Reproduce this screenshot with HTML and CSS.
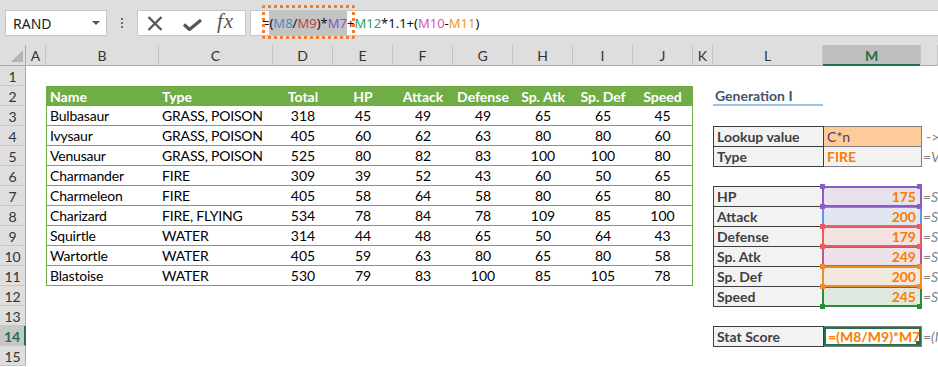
FILE: index.html
```html
<!DOCTYPE html>
<html lang="en">
<head>
    <meta charset="UTF-8">
    <meta name="viewport" content="width=device-width, initial-scale=1.0">
    <title>Pokemon Stat Score</title>
    <link rel="stylesheet" href="styles.css">
</head>
<body>
    <div class="toolbar">
        <div class="namebox">RAND<span class="caret"></span></div>
        <div class="grip"><i></i><i></i><i></i></div>
        <div class="fxbox">
            <svg class="ico-x" width="16" height="15" viewBox="0 0 16 15"><path d="M1.5 1 L14.5 14 M14.5 1 L1.5 14" stroke="#555" stroke-width="2.3" fill="none"/></svg>
            <svg class="ico-ok" width="19" height="12" viewBox="0 0 19 12"><path d="M1 5.5 L6.5 10.5 L18 1" stroke="#555" stroke-width="3.2" fill="none"/></svg>
            <span class="fx">fx</span>
        </div>
        <div class="formula">=<span class="sel">(<span class="r-blue">M8</span>/<span class="r-red">M9</span>)*<span class="r-purple">M7</span></span>+<span class="r-green">M12</span>*1.1+(<span class="r-pink">M10</span>-<span class="r-orange">M11</span>)</div>
        <div class="callout"></div>
    </div>

    <div class="colheads">
        <div class="corner"><svg width="25" height="20"><polygon points="23,5 23,17 11,17" fill="#b4b4b4"/></svg></div>
        <div>A</div><div>B</div><div>C</div><div>D</div><div>E</div><div>F</div><div>G</div>
        <div>H</div><div>I</div><div>J</div><div>K</div><div>L</div><div class="active">M</div><div></div>
    </div>

    <div class="sheet">
        <div class="rowheads">
            <div>1</div><div>2</div><div>3</div><div>4</div><div>5</div>
            <div>6</div><div>7</div><div>8</div><div>9</div><div>10</div>
            <div>11</div><div>12</div><div>13</div><div class="active">14</div><div>15</div>
        </div>

        <div class="canvas">
            <table class="poke">
                <colgroup>
                    <col style="width:113px"><col style="width:114px">
                    <col><col><col><col><col><col><col>
                </colgroup>
                <thead>
                    <tr><th class="txt">Name</th><th class="txt">Type</th><th>Total</th><th>HP</th><th>Attack</th><th>Defense</th><th>Sp. Atk</th><th>Sp. Def</th><th>Speed</th></tr>
                </thead>
                <tbody>
                    <tr><td class="txt">Bulbasaur</td><td class="txt">GRASS, POISON</td><td>318</td><td>45</td><td>49</td><td>49</td><td>65</td><td>65</td><td>45</td></tr>
                    <tr><td class="txt">Ivysaur</td><td class="txt">GRASS, POISON</td><td>405</td><td>60</td><td>62</td><td>63</td><td>80</td><td>80</td><td>60</td></tr>
                    <tr><td class="txt">Venusaur</td><td class="txt">GRASS, POISON</td><td>525</td><td>80</td><td>82</td><td>83</td><td>100</td><td>100</td><td>80</td></tr>
                    <tr><td class="txt">Charmander</td><td class="txt">FIRE</td><td>309</td><td>39</td><td>52</td><td>43</td><td>60</td><td>50</td><td>65</td></tr>
                    <tr><td class="txt">Charmeleon</td><td class="txt">FIRE</td><td>405</td><td>58</td><td>64</td><td>58</td><td>80</td><td>65</td><td>80</td></tr>
                    <tr><td class="txt">Charizard</td><td class="txt">FIRE, FLYING</td><td>534</td><td>78</td><td>84</td><td>78</td><td>109</td><td>85</td><td>100</td></tr>
                    <tr><td class="txt">Squirtle</td><td class="txt">WATER</td><td>314</td><td>44</td><td>48</td><td>65</td><td>50</td><td>64</td><td>43</td></tr>
                    <tr><td class="txt">Wartortle</td><td class="txt">WATER</td><td>405</td><td>59</td><td>63</td><td>80</td><td>65</td><td>80</td><td>58</td></tr>
                    <tr><td class="txt">Blastoise</td><td class="txt">WATER</td><td>530</td><td>79</td><td>83</td><td>100</td><td>85</td><td>105</td><td>78</td></tr>
                </tbody>
            </table>

            <div class="gen">Generation I</div>

            <table class="block lookup">
                <tr><td class="out">Lookup value</td><td class="inp">C*n</td><td class="note plain">-&gt;</td></tr>
                <tr><td class="out">Type</td><td class="calc">FIRE</td><td class="note">=V</td></tr>
            </table>

            <table class="block stats">
                <tr><td class="out">HP</td><td class="calc num hl h-purple">175</td><td class="note">=Sc</td></tr>
                <tr><td class="out">Attack</td><td class="calc num hl h-blue">200</td><td class="note">=Sc</td></tr>
                <tr><td class="out">Defense</td><td class="calc num hl h-red">179</td><td class="note">=Sc</td></tr>
                <tr><td class="out">Sp. Atk</td><td class="calc num hl h-pink">249</td><td class="note">=Sc</td></tr>
                <tr><td class="out">Sp. Def</td><td class="calc num hl h-orange">200</td><td class="note">=Sc</td></tr>
                <tr><td class="out">Speed</td><td class="calc num hl h-green">245</td><td class="note">=Sc</td></tr>
            </table>

            <table class="block score">
                <tr><td class="out">Stat Score</td><td class="calc editing">=(M8/M9)*M7+</td><td class="note">=(M</td></tr>
            </table>
        </div>
    </div>
</body>
</html>
```

FILE: styles.css
```css
body {
    margin: 0;
    overflow: hidden;
    background: #fff;
    font-family: Lato, "Liberation Sans", sans-serif;
    color: #000;
}
* {
    box-sizing: border-box;
}

/* formula bar */
.toolbar {
    position: relative;
    height: 45px;
    padding-top: 10px;
    background: #dedede;
    display: flex;
    align-items: flex-start;
}
.namebox {
    margin-left: 5px;
    width: 102px;
    height: 26px;
    background: #fff;
    border: 1px solid #c6c6c6;
    display: flex;
    align-items: center;
    padding-left: 7px;
    font: 14px "Noto Sans", sans-serif;
    color: #222;
}
.caret {
    margin-left: auto;
    margin-right: 6px;
    border-left: 4px solid transparent;
    border-right: 4px solid transparent;
    border-top: 4px solid #555;
}
.grip {
    width: 30px;
    height: 26px;
    display: flex;
    flex-direction: column;
    align-items: center;
    justify-content: center;
    gap: 2px;
}
.grip i {
    width: 2px;
    height: 2px;
    background: #6b6b6b;
}
.fxbox {
    width: 109px;
    height: 26px;
    background: #fff;
    border: 1px solid #c6c6c6;
    display: flex;
    align-items: center;
    padding-left: 9px;
}
.ico-ok {
    margin-left: 20px;
    margin-top: 3px;
}
.fx {
    margin-left: 15px;
    font: italic 21px "Liberation Serif", serif;
    letter-spacing: 1px;
    color: #555;
    margin-top: -3px;
}
.formula {
    flex: 1;
    margin-left: 4px;
    height: 26px;
    background: #fff;
    border: 1px solid #c6c6c6;
    border-right: none;
    padding-left: 11px;
    font: 13px "Noto Sans", sans-serif;
    line-height: 24px;
    color: #111;
    white-space: nowrap;
}
.sel {
    background: #c3c3c3;
    padding: 3px 0;
}
.r-blue { color: #4d87c2; }
.r-red { color: #c2404a; }
.r-purple { color: #8a4fc9; }
.r-green { color: #25a36f; }
.r-pink { color: #d257b6; }
.r-orange { color: #f0952b; }
.callout {
    position: absolute;
    left: 262px;
    top: 5px;
    width: 93px;
    height: 34px;
    border: 3px dotted #ed7d31;
    border-radius: 3px;
}

/* headers */
.colheads {
    display: grid;
    grid-template-columns: 26px 20px 113px 114px repeat(7, 60px) 20px 110px 98px 1fr;
    height: 21px;
    background: #dedede;
    border-bottom: 1px solid #ababab;
}
.colheads div {
    border-right: 1px solid #c4c4c4;
    text-align: center;
    font-size: 14px;
    line-height: 21px;
    color: #333;
}
.colheads .corner {
    border-right: 1px solid #ababab;
}
.colheads .corner svg {
    display: block;
}
.colheads .active {
    background: #bebebe;
    color: #217346;
    font-weight: bold;
    box-shadow: inset 0 -2px #217346;
}
.sheet {
    display: flex;
}
.rowheads {
    width: 26px;
    flex: none;
    background: #dedede;
}
.rowheads div {
    height: 20px;
    border-right: 1px solid #ababab;
    border-bottom: 1px solid #c8c8c8;
    text-align: center;
    font-size: 14px;
    line-height: 21px;
    color: #333;
}
.rowheads .active {
    background: #c6c6c6;
    color: #217346;
    font-weight: bold;
    border-right: 2px solid #217346;
}

/* cells */
.canvas {
    flex: 1;
    display: grid;
    grid-template-columns: 20px 113px 114px repeat(7, 60px) 20px 110px 98px 1fr;
    grid-template-rows: repeat(15, 20px);
    font-size: 14px;
}
.poke {
    grid-column: 2 / 11;
    grid-row: 2 / 12;
    table-layout: fixed;
    width: 647px;
    border-collapse: separate;
    border-spacing: 0;
}
.poke tr {
    height: 20px;
}
.poke th, .poke td {
    padding: 0 3px;
    text-align: center;
    white-space: nowrap;
    line-height: 19px;
}
.poke th {
    background: #70ad47;
    color: #fff;
    font-weight: bold;
}
.poke td {
    border-bottom: 1px solid #70ad47;
}
.poke tr > :first-child {
    border-left: 1px solid #70ad47;
}
.poke tr > :last-child {
    border-right: 1px solid #70ad47;
}
.poke .txt {
    text-align: left;
}
.poke td.txt {
    letter-spacing: -0.2px;
}
.gen {
    grid-column: 12;
    grid-row: 2;
    border-bottom: 2px solid #9dc3e6;
    color: #44546a;
    font-weight: bold;
    padding-left: 2px;
    line-height: 19px;
}
.block {
    grid-column: 12 / 15;
    border-collapse: collapse;
    table-layout: fixed;
    width: 100%;
}
.block tr {
    height: 20px;
}
.block td {
    padding: 0 3px;
    white-space: nowrap;
    line-height: 18px;
}
.block td:first-child {
    width: 110px;
}
.block td:nth-child(2) {
    width: 98px;
}
.lookup { grid-row: 4 / 6; }
.stats { grid-row: 7 / 13; }
.score { grid-row: 14; }
.out {
    background: #f2f2f2;
    border: 1px solid #3f3f3f;
    color: #3f3f3f;
    font-weight: bold;
}
.inp {
    background: #ffcc99;
    border: 1px solid #7f7f7f;
    color: #3f3f76;
}
.calc {
    background: #f2f2f2;
    border: 1px solid #7f7f7f;
    color: #fa7d00;
    font-weight: bold;
}
.num {
    text-align: right;
}
.block td.num {
    padding-right: 5px;
}
.block td.note {
    color: #7f7f7f;
    font-style: italic;
    padding-left: 1px;
}
.block td.note.plain {
    font-style: normal;
    padding-left: 4px;
}

/* range highlights while editing M14 */
.hl {
    position: relative;
}
.hl::after {
    content: "";
    position: absolute;
    top: -1px;
    bottom: -1px;
    left: -2px;
    right: -1px;
    border: 2px solid var(--c);
    z-index: var(--z);
}
.hl::before {
    content: "";
    position: absolute;
    top: -3px;
    left: -4px;
    width: 5px;
    height: 5px;
    background: var(--c);
    box-shadow: 97px 0 var(--c), 0 20px var(--c), 97px 20px var(--c);
    z-index: var(--z);
}
.h-purple { --c: #8b5cc6; --z: 2; background: #e7e1ee; }
.h-blue { --c: #5b96ea; --z: 1; background: #e1e6f1; }
.h-red { --c: #e45c5f; --z: 3; background: #f2e2e2; }
.h-pink { --c: #c4509c; --z: 1; background: #ede2ea; }
.h-orange { --c: #e88c2d; --z: 3; background: #f3e8dd; }
.h-green { --c: #2b8c3b; --z: 1; background: #dfe9df; }
.h-blue::before, .h-pink::before {
    display: none;
}
.block td.editing {
    position: relative;
    background: #fff;
    overflow: hidden;
    padding-left: 4px;
}
.editing::after {
    content: "";
    position: absolute;
    inset: -1px;
    border: 3px solid #217346;
}
.editing::before {
    content: "";
    position: absolute;
    right: 0;
    bottom: 0;
    width: 5px;
    height: 5px;
    background: #217346;
    z-index: 1;
}
```
